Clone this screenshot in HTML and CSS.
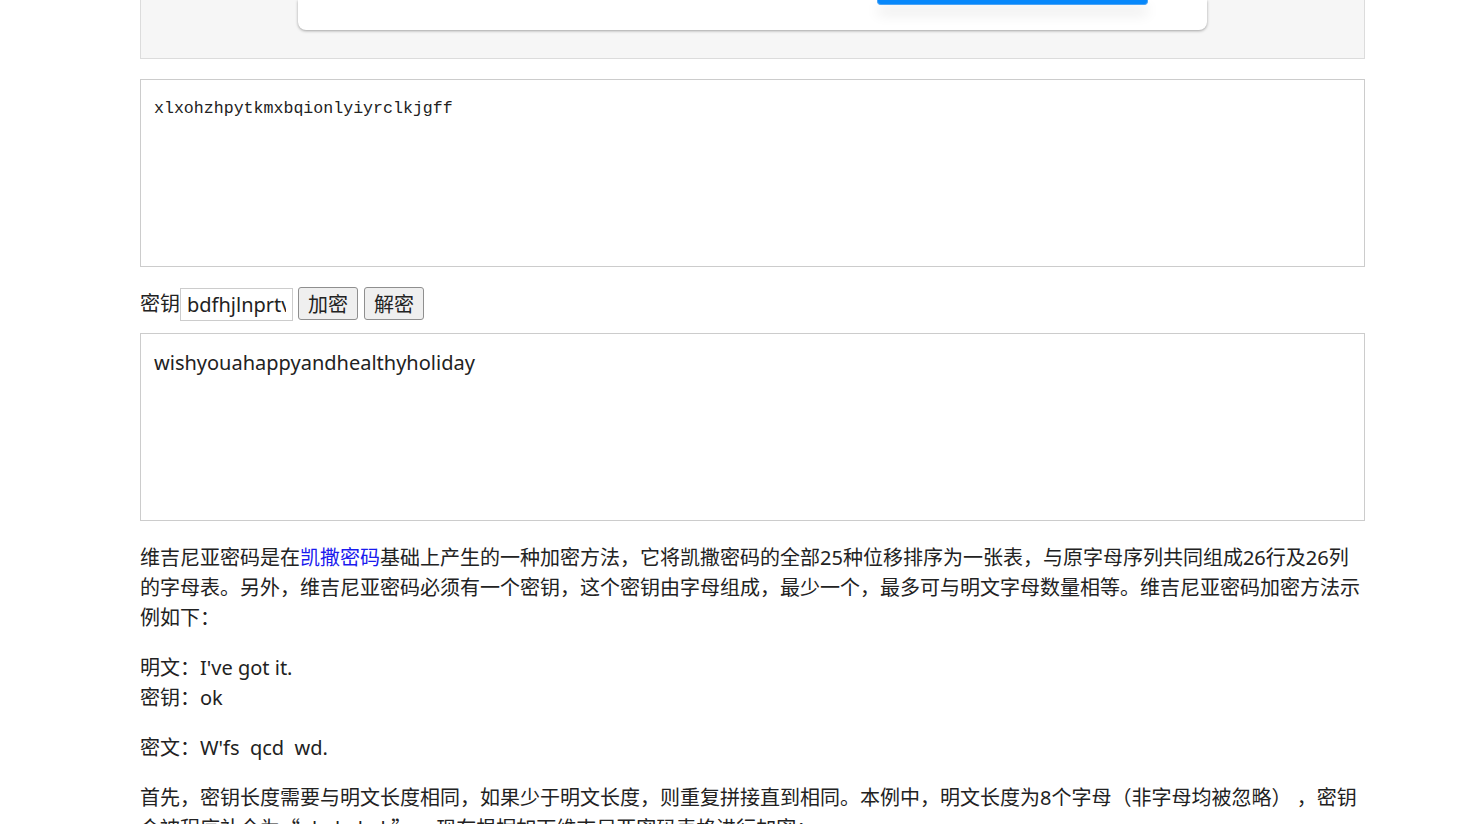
FILE: index.html
```html
<!DOCTYPE html>
<html>
	<head>
		<meta charset="UTF-8">
		<title>维吉尼亚密码</title>
		<link rel="stylesheet" href="styles.css">
	</head>
	<body>
		<div id="content">
			<div class="demo">
				<div class="card">
					<div class="card-btn"></div>
				</div>
			</div>
			<textarea class="cipher">xlxohzhpytkmxbqionlyiyrclkjgff</textarea>
			<div class="tools">
				<span class="label">密钥</span>
				<input type="text" class="key" value="bdfhjlnprtvxz" />
				<button class="btn">加密</button>
				<button class="btn">解密</button>
			</div>
			<textarea class="plain">wishyouahappyandhealthyholiday</textarea>
			<div class="article">
				<p>维吉尼亚密码是在<a href="#">凯撒密码</a>基础上产生的一种加密方法，它将凯撒密码的全部25种位移排序为一张表，与原字母序列共同组成26行及26列的字母表。另外，维吉尼亚密码必须有一个密钥，这个密钥由字母组成，最少一个，最多可与明文字母数量相等。维吉尼亚密码加密方法示例如下：</p>
				<p>明文：I've got it.<br />密钥：ok</p>
				<p>密文：W'fs&nbsp; qcd&nbsp; wd.</p>
				<p>首先，密钥长度需要与明文长度相同，如果少于明文长度，则重复拼接直到相同。本例中，明文长度为8个字母（非字母均被忽略） ，密钥会被程序补全为<span class="cjk">“</span>okokokok<span class="cjk">”</span> 。现在根据如下维吉尼亚密码表格进行加密：</p>
			</div>
		</div>
	</body>
</html>
```

FILE: styles.css
```css
html, body {
	margin: 0;
	padding: 0;
	background-color: #fff;
}
body {
	font-family: "Noto Sans", "Noto Sans CJK SC", sans-serif;
	font-size: 20px;
	line-height: 30px;
	color: #222;
	overflow: hidden;
	height: 824px;
}
#content {
	width: 1225px;
	margin-left: 140px;
}
#content .demo {
	height: 58px;
	background-color: #f6f6f6;
	border: solid 1px #dcdcdc;
	border-top: none;
	margin-bottom: 20px;
}
#content .card {
	display: flex;
	justify-content: flex-end;
	width: 909px;
	height: 30px;
	margin: 0 auto;
	padding-right: 59px;
	box-sizing: border-box;
	background-color: #fff;
	border-radius: 0 0 8px 8px;
	box-shadow: 0 1px 3px rgba(0, 0, 0, 0.35);
}
#content .card-btn {
	width: 271px;
	height: 5px;
	box-sizing: border-box;
	background-color: #0788fb;
	border: solid 1px #4aa3f5;
	border-top: none;
	border-radius: 0 0 4px 4px;
	box-shadow: 0 8px 14px rgba(0, 0, 0, 0.14);
}
#content textarea {
	display: block;
	width: 100%;
	height: 188px;
	box-sizing: border-box;
	padding: 13px;
	border: solid 1px #ccc;
	resize: none;
	color: #222;
	outline: none;
}
#content .cipher {
	font-family: "Liberation Mono", monospace;
	font-size: 16.6px;
	line-height: 30px;
	padding-top: 14px;
	margin-bottom: 20px;
}
#content .plain {
	font-family: "Noto Sans", "Noto Sans CJK SC", sans-serif;
	font-size: 20px;
	line-height: 30px;
	padding-top: 14px;
}
#content .tools {
	display: flex;
	align-items: center;
	height: 34px;
	margin-bottom: 12px;
}
#content .key {
	width: 113px;
	height: 33px;
	box-sizing: border-box;
	padding: 0 6px;
	border: solid 1px #ccc;
	font-family: "Noto Sans", "Noto Sans CJK SC", sans-serif;
	font-size: 20px;
	color: #222;
	outline: none;
}
#content .btn {
	height: 33px;
	margin: -2px 0 0 5px;
	padding: 0 9px;
	box-sizing: border-box;
	background-color: #efefef;
	border: solid 1px #8f8f8f;
	border-radius: 3px;
	font-family: "Noto Sans CJK SC", sans-serif;
	font-size: 20px;
	color: #222;
}
#content .btn + .btn {
	margin-left: 6px;
}
#content .article {
	padding-top: 2px;
}
#content .article p {
	margin: 20px 0;
}
#content .article a {
	color: #1a1aee;
	text-decoration: none;
}
#content .article .cjk {
	font-family: "Noto Sans CJK SC", sans-serif;
}
```
